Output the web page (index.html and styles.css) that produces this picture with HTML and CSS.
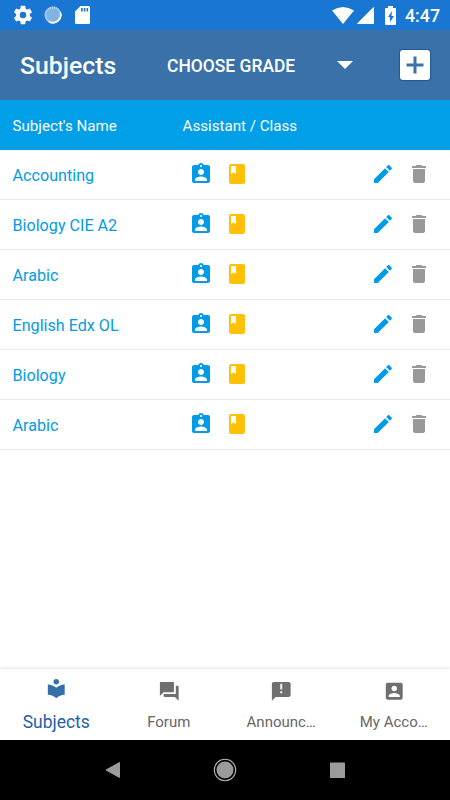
FILE: index.html
```html
<!DOCTYPE html>
<html lang="en">
<head>
<meta charset="utf-8">
<title>Subjects</title>
<link rel="stylesheet" href="styles.css">
</head>
<body>
<svg class="defs" aria-hidden="true">
  <symbol id="person-card" viewBox="0 0 24 24"><path d="M19 3h-4.180C14.400 1.840 13.300 1 12 1c-1.300 0-2.400.84-2.820 2H5c-1.100 0-2 .9-2 2v14c0 1.100.9 2 2 2h14c1.100 0 2-.9 2-2V5c0-1.100-.9-2-2-2zm-7 0c.55 0 1 .45 1 1s-.45 1-1 1-1-.45-1-1 .45-1 1-1zm0 4c1.660 0 3 1.340 3 3s-1.340 3-3 3-3-1.340-3-3 1.340-3 3-3zm6 12H6v-1.400c0-2 4-3.100 6-3.100s6 1.100 6 3.100V19z"/></symbol>
  <symbol id="book" viewBox="0 0 24 24"><path d="M18 2H6c-1.100 0-2 .9-2 2v16c0 1.100.9 2 2 2h12c1.100 0 2-.9 2-2V4c0-1.100-.9-2-2-2zM6 4h5v8l-2.500-1.500L6 12V4z"/></symbol>
  <symbol id="pencil" viewBox="0 0 24 24"><path d="M3 17.250V21h3.750L17.810 9.940l-3.750-3.750L3 17.250zM20.710 7.040c.39-.39.39-1.020 0-1.410l-2.340-2.340c-.39-.39-1.020-.39-1.410 0l-1.830 1.830 3.750 3.750 1.830-1.830z"/></symbol>
  <symbol id="trash" viewBox="0 0 24 24"><path d="M6 19c0 1.100.9 2 2 2h8c1.100 0 2-.9 2-2V7H6v12z"/><path d="M19 4h-3.500l-1-1h-5l-1 1H5v2h14V4z"/></symbol>
</svg>
<header class="status">
  <div class="status-left">
    <svg viewBox="0 0 24 24" width="22" height="22"><path d="M19.430 12.980c.04-.32.07-.64.07-.98s-.03-.66-.07-.98l2.110-1.650c.19-.15.24-.42.12-.64l-2-3.460c-.12-.22-.39-.3-.61-.22l-2.490 1c-.52-.4-1.080-.73-1.690-.98l-.38-2.650C14.460 2.180 14.250 2 14 2h-4c-.25 0-.46.18-.49.42l-.38 2.650c-.61.25-1.170.59-1.690.98l-2.490-1c-.23-.09-.49 0-.61.22l-2 3.460c-.13.22-.07.49.12.64l2.110 1.650c-.04.32-.07.65-.07.98s.03.66.07.98l-2.110 1.650c-.19.15-.24.42-.12.64l2 3.460c.12.22.39.3.61.22l2.490-1c.52.4 1.080.73 1.690.98l.38 2.650c.03.24.24.42.49.42h4c.25 0 .46-.18.49-.42l.38-2.650c.61-.25 1.170-.59 1.690-.98l2.490 1c.23.09.49 0 .61-.22l2-3.460c.12-.22.07-.49-.12-.64l-2.110-1.650zM12 15.500a3.500 3.500 0 1 1 0-7 3.500 3.500 0 0 1 0 7z"/></svg>
    <svg class="spinner" viewBox="0 0 20 20" width="20" height="20"><circle cx="10" cy="10" r="8.500" fill-opacity=".45"/><circle cx="10" cy="10" r="7.500" fill="none" stroke="#fff" stroke-opacity=".5" stroke-width="2" stroke-dasharray="1 1"/><path d="M18 7a8.500 8.500 0 0 1-12.500 10.200l1-1A7.500 7.500 0 0 0 17 8z"/></svg>
    <svg class="card" viewBox="0 0 15 18" width="15" height="18"><path fill-rule="evenodd" d="M5.500 0H13.500Q15 0 15 1.500V16.500Q15 18 13.500 18H1.500Q0 18 0 16.500V5.500zM6 2v3.500h1.700V2zm2.800 0v3.500h1.600V2zm2.700 0v3.500h1.600V2z"/></svg>
  </div>
  <div class="status-right">
    <svg viewBox="0 0 22 17" width="22" height="17"><path d="M0 3.600Q11-3.600 22 3.600L11 17z"/></svg>
    <svg class="signal" viewBox="0 0 17 17" width="17" height="17"><path d="M16.500 .5V16.500H.5z" stroke="#fff" stroke-linejoin="round"/></svg>
    <svg class="battery" viewBox="0 0 11 19" width="11" height="19"><path fill-rule="evenodd" d="M3 0h5v2h2q1 0 1 1v15q0 1-1 1H1q-1 0-1-1V3q0-1 1-1h2zM7 5L3 11h2v5l4-6H6.500z"/></svg>
    <span class="clock">4:47</span>
  </div>
</header>
<div class="appbar">
  <h1>Subjects</h1>
  <div class="grade"><span>CHOOSE GRADE</span><i class="caret"></i></div>
  <button class="add" aria-label="Add subject"><svg viewBox="0 0 30 30" width="30" height="30"><path d="M13.500 6.500h3v7h7v3h-7v7h-3v-7h-7v-3h7z"/></svg></button>
</div>
<main>
  <div class="row head"><span>Subject's Name</span><span>Assistant / Class</span></div>
  <div class="row"><span class="name">Accounting</span><svg class="ind"><use href="#person-card"/></svg><svg class="book"><use href="#book"/></svg><svg class="edit"><use href="#pencil"/></svg><svg class="del"><use href="#trash"/></svg></div>
  <div class="row"><span class="name">Biology CIE A2</span><svg class="ind"><use href="#person-card"/></svg><svg class="book"><use href="#book"/></svg><svg class="edit"><use href="#pencil"/></svg><svg class="del"><use href="#trash"/></svg></div>
  <div class="row"><span class="name">Arabic</span><svg class="ind"><use href="#person-card"/></svg><svg class="book"><use href="#book"/></svg><svg class="edit"><use href="#pencil"/></svg><svg class="del"><use href="#trash"/></svg></div>
  <div class="row"><span class="name">English Edx OL</span><svg class="ind"><use href="#person-card"/></svg><svg class="book"><use href="#book"/></svg><svg class="edit"><use href="#pencil"/></svg><svg class="del"><use href="#trash"/></svg></div>
  <div class="row"><span class="name">Biology</span><svg class="ind"><use href="#person-card"/></svg><svg class="book"><use href="#book"/></svg><svg class="edit"><use href="#pencil"/></svg><svg class="del"><use href="#trash"/></svg></div>
  <div class="row"><span class="name">Arabic</span><svg class="ind"><use href="#person-card"/></svg><svg class="book"><use href="#book"/></svg><svg class="edit"><use href="#pencil"/></svg><svg class="del"><use href="#trash"/></svg></div>
</main>
<nav class="tabs">
  <a class="tab active"><svg viewBox="0 0 24 24"><path d="M12 11.550C9.640 9.350 6.480 8 3 8v11c3.480 0 6.640 1.350 9 3.550 2.360-2.190 5.520-3.550 9-3.550V8c-3.480 0-6.640 1.350-9 3.550zM12 8c1.660 0 3-1.340 3-3s-1.340-3-3-3-3 1.340-3 3 1.340 3 3 3z"/></svg><span>Subjects</span></a>
  <a class="tab"><svg viewBox="0 0 24 24"><path d="M21 6h-2v9H6v2c0 .55.45 1 1 1h11l4 4V7c0-.55-.45-1-1-1zm-4 6V3c0-.55-.45-1-1-1H3c-.55 0-1 .45-1 1v14l4-4h10c.55 0 1-.45 1-1z"/></svg><span>Forum</span></a>
  <a class="tab"><svg viewBox="0 0 24 24"><path d="M20 2H4c-1.100 0-1.990.9-1.990 2L2 22l4-4h14c1.100 0 2-.9 2-2V4c0-1.100-.9-2-2-2zm-7 12h-2v-2h2v2zm0-4h-2V4h2v6z"/></svg><span>Announc…</span></a>
  <a class="tab"><svg viewBox="0 0 24 24"><path d="M3 5v14c0 1.100.89 2 2 2h14c1.100 0 2-.9 2-2V5c0-1.100-.9-2-2-2H5c-1.110 0-2 .9-2 2zm12 4c0 1.660-1.340 3-3 3s-3-1.340-3-3 1.340-3 3-3 3 1.340 3 3zm-9 8c0-2 4-3.100 6-3.100s6 1.100 6 3.100v1H6v-1z"/></svg><span>My Acco…</span></a>
</nav>
<footer class="sysnav">
  <svg viewBox="0 0 24 24"><path d="M5 12L18.500 4.500V19.500z" stroke="#9b9b9b" stroke-linejoin="round"/></svg>
  <svg viewBox="0 0 24 24"><circle cx="12" cy="12" r="8.500"/><circle cx="12" cy="12" r="10.700" fill="none" stroke="#b4b4b4" stroke-width="1.100"/></svg>
  <svg viewBox="0 0 24 24"><rect x="4" y="4.500" width="15" height="15.500" rx=".6"/></svg>
</footer>
</body>
</html>
```

FILE: styles.css
```css
* { box-sizing: border-box; }
body {
  margin: 0;
  width: 450px;
  height: 800px;
  display: flex;
  flex-direction: column;
  overflow: hidden;
  background: #fff;
  font-family: Roboto, sans-serif;
}
svg { display: block; flex: none; }
.defs { display: none; }

.status {
  height: 30px;
  flex: none;
  display: flex;
  justify-content: space-between;
  background: #1976d2;
  color: #fff;
  fill: #fff;
}
.status-left, .status-right { display: flex; align-items: center; }
.status-left { padding-left: 11.500px; }
.spinner { margin-left: 9px; }
.card { margin-left: 12px; }
.status-right { padding-right: 10px; }
.signal { margin-left: 3px; }
.battery { margin-left: 11px; }
.clock {
  margin-left: 9px;
  width: 35px;
  padding-top: 1px;
  font-size: 17.800px;
  font-weight: 500;
  line-height: 29px;
  white-space: nowrap;
}

.appbar {
  height: 70px;
  flex: none;
  display: flex;
  align-items: center;
  padding: 0 20px;
  background: #3a71a9;
  color: #fff;
}
h1 {
  margin: 2px 0 0;
  width: 147px;
  font-size: 24.800px;
  font-weight: 500;
  line-height: 30px;
}
.grade { display: flex; align-items: center; font-size: 17.450px; font-weight: 500; }
.grade span { width: 170px; padding-top: 2px; line-height: 20px; white-space: nowrap; }
.caret {
  border: 8px solid transparent;
  border-top: 8px solid #fff;
  border-bottom: 0;
}
.add {
  margin-left: auto;
  width: 30px;
  height: 30px;
  padding: 0;
  border: 0;
  border-radius: 3px;
  background: #fff;
  fill: #3a71a9;
  box-shadow: 0 0 1px 1px #1f5c98;
}

main { flex: 1; }
.row {
  height: 50px;
  display: flex;
  align-items: center;
  padding-left: 12.500px;
  border-bottom: 1px solid #ececec;
}
.row svg { width: 24px; height: 24px; margin-top: -.4px; }
.head {
  border: 0;
  background: #009fe8;
  color: #fff;
  font-size: 15.150px;
}
.head span:first-child { width: 170px; }
.head span { padding-top: 2px; }
.name { width: 176px; padding-top: 2px; font-size: 16.150px; color: #039be5; }
.ind { fill: #039be5; }
.row .book { margin-left: 12px; fill: #ffc107; }
.row .edit { margin-left: 122px; fill: #039be5; }
.row .del { margin-left: 12.500px; fill: #999; }

.tabs {
  height: 71px;
  flex: none;
  display: grid;
  grid-template-columns: repeat(4, 1fr);
  box-shadow: 0 -1px 3px rgba(0, 0, 0, .12);
  color: #666;
}
.tab {
  display: flex;
  flex-direction: column;
  align-items: center;
  padding-top: 11px;
  font-size: 15px;
  fill: #6f6f6f;
}
.tab svg { width: 22.500px; height: 22.500px; }
.tab span { margin-top: 9px; line-height: 20px; }
.active { padding-top: 8px; fill: #346fa9; color: #1e5fa8; font-size: 17.500px; }
.active span { margin-top: 12px; }

.sysnav {
  height: 60px;
  flex: none;
  display: flex;
  justify-content: space-between;
  align-items: center;
  padding: 0 100.500px;
  background: #000;
  fill: #9b9b9b;
}
.sysnav svg { width: 24px; height: 24px; }
```
